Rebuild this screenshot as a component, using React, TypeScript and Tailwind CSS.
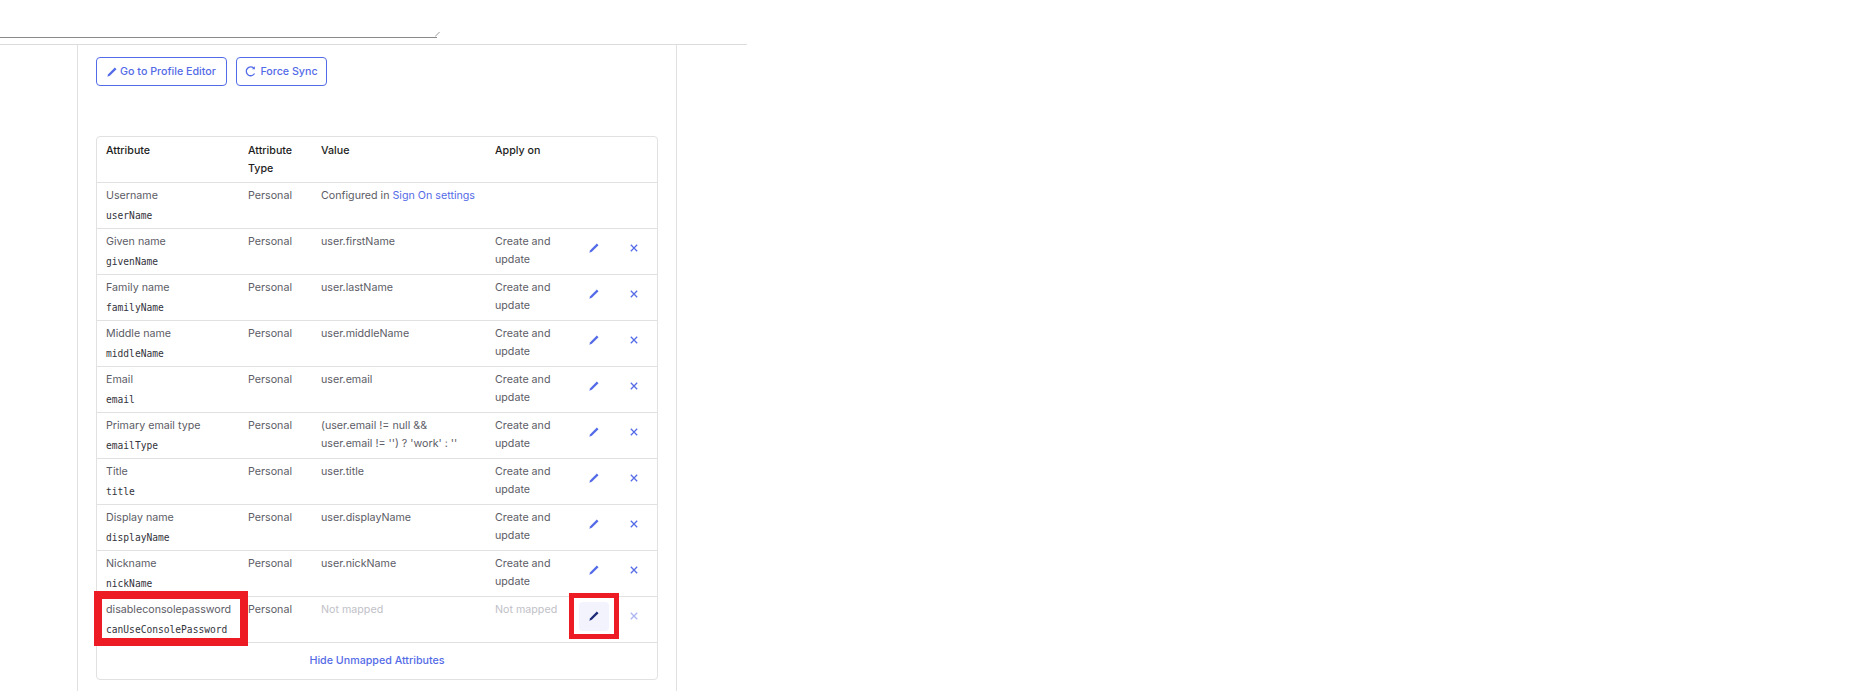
import React from 'react'

const rows = [
  { label: 'Username', name: 'userName', value: 'user', apply: '' },
  { label: 'Given name', name: 'givenName', value: 'user.firstName', apply: 'Create and update' },
  { label: 'Family name', name: 'familyName', value: 'user.lastName', apply: 'Create and update' },
  { label: 'Middle name', name: 'middleName', value: 'user.middleName', apply: 'Create and update' },
  { label: 'Email', name: 'email', value: 'user.email', apply: 'Create and update' },
  { label: 'Primary email type', name: 'emailType', value: "(user.email != null && user.email != '') ? 'work' : ''", apply: 'Create and update' },
  { label: 'Title', name: 'title', value: 'user.title', apply: 'Create and update' },
  { label: 'Display name', name: 'displayName', value: 'user.displayName', apply: 'Create and update' },
  { label: 'Nickname', name: 'nickName', value: 'user.nickName', apply: 'Create and update' },
]

const Pencil = ({ className }: { className: string }) => (
  <svg viewBox="0 0 12 12" className={className} fill="currentColor">
    <path d="M9.4 0.6 11.4 2.6 3.4 10.6 0.4 11.6 1.4 8.6Z" />
  </svg>
)

const Cross = ({ className }: { className: string }) => (
  <svg viewBox="0 0 10 10" className={className} fill="none" stroke="currentColor" strokeWidth="1.6">
    <path d="M1 1 9 9M9 1 1 9" />
  </svg>
)

const Refresh = () => (
  <svg viewBox="0 0 12 12" className="w-[11px] h-[11px]" fill="none" stroke="currentColor" strokeWidth="1.4">
    <path d="M10.4 8.2A4.8 4.8 0 1 1 9.6 2.4" />
    <path d="M10.8 0.4V3.6H7.6" fill="currentColor" stroke="none" />
  </svg>
)

const App = () => {
  return (
    <div className="w-[1874px] h-[691px] overflow-hidden bg-white font-['Inter',sans-serif] text-[10.7px] leading-[18px] text-[#5c5c66]">
      <div className="w-[747px]">
        <div className="relative w-[437px] h-[38px] border-b border-[#8a8a8a]">
          <svg viewBox="0 0 6 6" className="absolute right-[-3px] bottom-0 w-[5px] h-[5px] text-[#8a8a8a]" fill="none" stroke="currentColor">
            <path d="M0 5.5 5.5 0" />
          </svg>
        </div>
        <div className="h-[7px] border-b border-[#dcdcdc]"></div>
        <div className="ml-[77px] w-[600px] h-[646px] border-x border-[#e1e1e1] px-[18px] pt-[12px]">
          <div className="flex gap-[9px]">
            <button className="flex items-center gap-[3px] w-[131px] h-[29px] justify-center rounded-[4px] border border-[#546be7] text-[#546be7] font-medium">
              <Pencil className="w-[10px] h-[10px]" />
              Go to Profile Editor
            </button>
            <button className="flex items-center gap-[4px] w-[91px] h-[29px] justify-center rounded-[4px] border border-[#546be7] text-[#546be7] font-medium">
              <Refresh />
              Force Sync
            </button>
          </div>

          <div className="relative mt-[50px] w-[562px] h-[544px] rounded-[4px] border border-[#e1e1e1]">
            <table className="w-full table-fixed border-collapse text-left">
              <colgroup>
                <col className="w-[142px]" />
                <col className="w-[73px]" />
                <col className="w-[174px]" />
                <col className="w-[85px]" />
                <col className="w-[46px]" />
                <col className="w-[40px]" />
              </colgroup>
              <thead>
                <tr className="h-[45px] border-b border-[#e1e1e1] align-top text-[#1d1d21]">
                  <th className="pl-[9px] pt-[5px] font-medium">Attribute</th>
                  <th className="pl-[9px] pt-[5px] font-medium">Attribute Type</th>
                  <th className="pl-[9px] pt-[5px] font-medium">Value</th>
                  <th className="pl-[9px] pt-[5px] font-medium">Apply on</th>
                  <th></th>
                  <th></th>
                </tr>
              </thead>
              <tbody>
                {rows.map((r, i) => (
                  <tr key={r.name} className="h-[46px] border-b border-[#e1e1e1] align-top">
                    <td className="pl-[9px] pt-[4px]">
                      <div>{r.label}</div>
                      <div className="mt-[2px] font-['DejaVu_Sans_Mono',monospace] text-[9.6px] text-[#33333b]">{r.name}</div>
                    </td>
                    <td className="pl-[9px] pt-[4px]">Personal</td>
                    <td className="pl-[9px] pr-[10px] pt-[4px]">
                      {i === 0 ? (
                        <>
                          Configured in <a className="text-[#546be7]">Sign On settings</a>
                        </>
                      ) : (
                        r.value
                      )}
                    </td>
                    <td className="pl-[9px] pt-[4px]">{r.apply}</td>
                    <td className="pt-[5px] text-[#546be7]">
                      {i > 0 && (
                        <div className="flex items-center justify-center h-[29px]">
                          <Pencil className="w-[10px] h-[10px]" />
                        </div>
                      )}
                    </td>
                    <td className="pt-[5px] pr-[7px] text-[#546be7]">
                      {i > 0 && (
                        <div className="flex items-center justify-center h-[29px]">
                          <Cross className="w-[8px] h-[8px]" />
                        </div>
                      )}
                    </td>
                  </tr>
                ))}
                <tr className="h-[46px] border-b border-[#e1e1e1] align-top">
                  <td className="pl-[9px] pt-[4px]">
                    <div>disableconsolepassword</div>
                    <div className="mt-[2px] font-['DejaVu_Sans_Mono',monospace] text-[9.6px] text-[#33333b]">canUseConsolePassword</div>
                  </td>
                  <td className="pl-[9px] pt-[4px]">Personal</td>
                  <td className="pl-[9px] pt-[4px] text-[#c1c1c8]">Not mapped</td>
                  <td className="pl-[9px] pt-[4px] text-[#c1c1c8]">Not mapped</td>
                  <td className="pt-[5px]">
                    <div className="flex items-center justify-center w-[30px] h-[29px] mx-auto rounded-[4px] bg-[#f2f3fd] text-[#1e2a78]">
                      <Pencil className="w-[10px] h-[10px]" />
                    </div>
                  </td>
                  <td className="pt-[5px] pr-[7px] text-[#aab5f2]">
                    <div className="flex items-center justify-center h-[29px]">
                      <Cross className="w-[8px] h-[8px]" />
                    </div>
                  </td>
                </tr>
                <tr className="h-[37px]">
                  <td colSpan={6} className="text-center align-middle font-medium text-[#546be7]">
                    Hide Unmapped Attributes
                  </td>
                </tr>
              </tbody>
            </table>
            <div className="absolute left-[-3px] top-[454px] w-[154px] h-[55px] border-[8px] border-[#ed1c24]"></div>
            <div className="absolute left-[472px] top-[456px] w-[50px] h-[46px] border-[5px] border-[#ed1c24]"></div>
          </div>
        </div>
      </div>
    </div>
  )
}

export default App
